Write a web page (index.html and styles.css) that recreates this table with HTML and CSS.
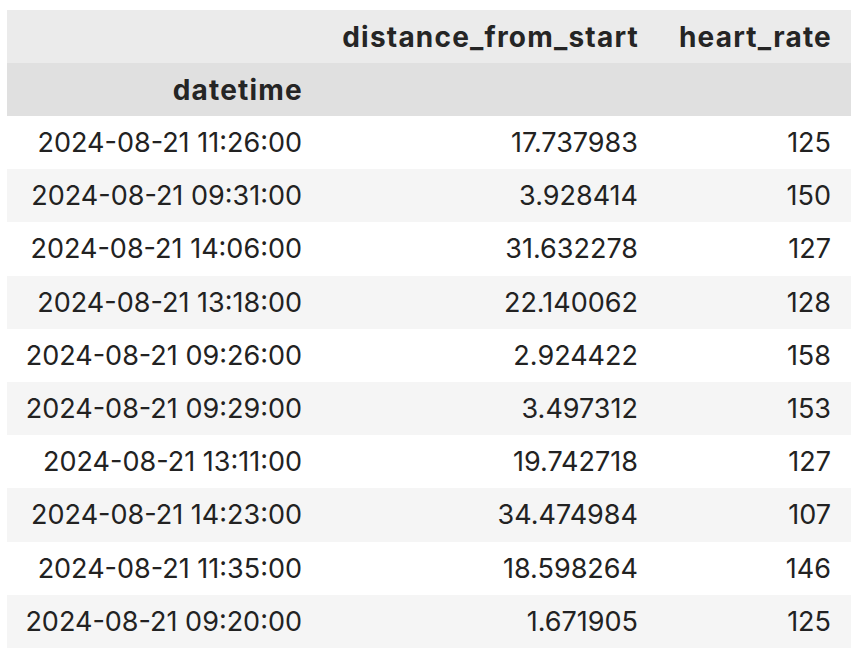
FILE: index.html
```html
<!DOCTYPE html>
<html>
<head>
<meta charset="utf-8">
<link rel="stylesheet" href="styles.css">
</head>
<body>
<table class="df">
  <colgroup>
    <col class="c-idx"><col class="c-dist"><col class="c-hr">
  </colgroup>
  <thead>
    <tr class="h-cols"><th></th><th>distance_from_start</th><th>heart_rate</th></tr>
    <tr class="h-idx"><th>datetime</th><th></th><th></th></tr>
  </thead>
  <tbody>
    <tr><th>2024-08-21 11:26:00</th><td>17.737983</td><td>125</td></tr>
    <tr><th>2024-08-21 09:31:00</th><td>3.928414</td><td>150</td></tr>
    <tr><th>2024-08-21 14:06:00</th><td>31.632278</td><td>127</td></tr>
    <tr><th>2024-08-21 13:18:00</th><td>22.140062</td><td>128</td></tr>
    <tr><th>2024-08-21 09:26:00</th><td>2.924422</td><td>158</td></tr>
    <tr><th>2024-08-21 09:29:00</th><td>3.497312</td><td>153</td></tr>
    <tr><th>2024-08-21 13:11:00</th><td>19.742718</td><td>127</td></tr>
    <tr><th>2024-08-21 14:23:00</th><td>34.474984</td><td>107</td></tr>
    <tr><th>2024-08-21 11:35:00</th><td>18.598264</td><td>146</td></tr>
    <tr><th>2024-08-21 09:20:00</th><td>1.671905</td><td>125</td></tr>
  </tbody>
</table>
</body>
</html>
```
FILE: styles.css
```css
html, body { background: #ffffff; }
body {
  margin: 0;
  padding: 10px 7px;
  font-family: Inter, "Open Sans", "Liberation Sans", sans-serif;
  color: #222222;
}
.df {
  border-collapse: collapse;
  table-layout: fixed;
  width: 844px;
  font-size: 27px;
}
.c-idx { width: 315px; }
.c-dist { width: 336px; }
.c-hr { width: 193px; }
.df th, .df td {
  height: 53px;
  padding: 0 20px 0 0;
  text-align: right;
  vertical-align: middle;
  white-space: nowrap;
  box-sizing: border-box;
}
.df thead th {
  font-weight: 700;
  font-size: 28px;
  letter-spacing: 1.2px;
  padding-right: 19px;
  color: #252525;
}
.df tbody th { font-weight: 400; }
.h-cols { background: #ebebeb; }
.h-idx { background: #e0e0e0; }
.df tbody tr:nth-child(even) { background: #f5f5f5; }
.df tbody tr { height: 53.2px; }
```
